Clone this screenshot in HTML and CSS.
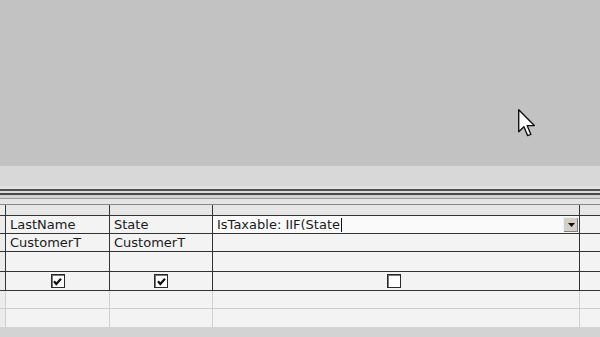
FILE: index.html
```html
<!DOCTYPE html>
<html>
<head>
<meta charset="utf-8">
<link rel="stylesheet" href="styles.css">
</head>
<body>
<div class="top">
  <svg class="cursor" width="18" height="29" viewBox="0 0 13 21" xmlns="http://www.w3.org/2000/svg">
    <path d="M0.5,0.5 L0.5,16.5 L4.3,12.8 L7,19.3 L9.3,18.4 L6.6,12 L11.8,12 Z" fill="#fff" stroke="#111" stroke-width="1" stroke-linejoin="round"/>
  </svg>
</div>
<div class="split"></div>
<div class="rules">
  <div class="ru a"></div>
  <div class="ru b"></div>
  <div class="ru c"></div>
  <div class="ru d"></div>
  <div class="ru e"></div>
  <div class="ru f"></div>
  <div class="ru g"></div>
  <div class="ru h"></div>
</div>
<div class="grid">
  <div class="row hdr">
    <div class="cell stub"></div><div class="cell c1"></div><div class="cell c2"></div><div class="cell c3"></div><div class="cell c4"></div>
  </div>
  <div class="row field">
    <div class="cell stub"></div>
    <div class="cell c1"><span class="txt">LastName</span></div>
    <div class="cell c2"><span class="txt">State</span></div>
    <div class="cell c3 combo">
      <span class="txt">IsTaxable: IIF(State</span><span class="caret"></span>
      <span class="drop"><svg width="7" height="4" viewBox="0 0 7 4"><path d="M0,0 L7,0 L3.5,4 Z" fill="#111"/></svg></span>
    </div>
    <div class="cell c4"></div>
  </div>
  <div class="row table">
    <div class="cell stub"></div>
    <div class="cell c1"><span class="txt">CustomerT</span></div>
    <div class="cell c2"><span class="txt">CustomerT</span></div>
    <div class="cell c3"></div>
    <div class="cell c4"></div>
  </div>
  <div class="row sort">
    <div class="cell stub"></div><div class="cell c1"></div><div class="cell c2"></div><div class="cell c3"></div><div class="cell c4"></div>
  </div>
  <div class="row show">
    <div class="cell stub"></div>
    <div class="cell c1 ctr"><span class="chk on"><svg width="11" height="11" viewBox="0 0 11 11"><path d="M2,5.3 L4.3,8 L9,2.8" fill="none" stroke="#111" stroke-width="2.2"/></svg></span></div>
    <div class="cell c2 ctr"><span class="chk on"><svg width="11" height="11" viewBox="0 0 11 11"><path d="M2,5.3 L4.3,8 L9,2.8" fill="none" stroke="#111" stroke-width="2.2"/></svg></span></div>
    <div class="cell c3 ctr"><span class="chk"></span></div>
    <div class="cell c4"></div>
  </div>
  <div class="row crit">
    <div class="cell stub"></div><div class="cell c1"></div><div class="cell c2"></div><div class="cell c3"></div><div class="cell c4"></div>
  </div>
  <div class="row orrow">
    <div class="cell stub"></div><div class="cell c1"></div><div class="cell c2"></div><div class="cell c3"></div><div class="cell c4"></div>
  </div>
</div>
<div class="bottom"></div>
</body>
</html>
```

FILE: styles.css
```css
html, body {
  margin: 0;
  padding: 0;
  width: 600px;
  height: 337px;
  overflow: hidden;
  background: #d3d3d3;
  font-family: "DejaVu Sans", "Liberation Sans", sans-serif;
  font-size: 13px;
  color: #1a1a1a;
}
.top {
  height: 166px;
  background: #c2c2c2;
  position: relative;
}
.cursor {
  position: absolute;
  left: 518px;
  top: 109px;
}
.split {
  height: 20px;
  background: #d8d8d8;
}
.rules { display: flex; flex-direction: column; }
.ru.a { height: 3px; background: #e2e2e2; }
.ru.b { height: 2px; background: #505050; }
.ru.c { height: 2px; background: #dadada; }
.ru.d { height: 2px; background: #474747; }
.ru.e { height: 3px; background: #d2d2d2; }
.ru.f { height: 1px; background: #9a9a9a; }
.ru.g { height: 5px; background: #e4e4e4; }
.ru.h { height: 1px; background: #8a8a8a; }

.grid { display: flex; flex-direction: column; background: #f3f3f3; }
.row {
  display: flex;
  border-bottom: 1px solid #333;
}
.cell {
  border-right: 1px solid #333;
  display: flex;
  align-items: center;
  box-sizing: content-box;
}
.stub { width: 5px; background: #ececec; }
.c1 { width: 103px; }
.c2 { width: 102px; }
.c3 { width: 366px; }
.c4 { flex: 1; border-right: none; }
.hdr { height: 10px; background: #e6e6e6; }
.field { height: 17px; }
.table { height: 17px; }
.sort { height: 19px; }
.show { height: 18px; }
.crit { height: 17px; border-bottom-color: #cdcdcd; }
.orrow { height: 18px; border-bottom: none; }
.crit .cell, .orrow .cell { border-right-color: #d0d0d0; }
.crit .c4, .orrow .c4 { border-right: none; }
.txt { padding-left: 4px; white-space: nowrap; line-height: 17px; }
.combo { background: #fafafa; position: relative; }
.caret {
  width: 1px;
  height: 14px;
  background: #111;
  margin-left: 1px;
}
.drop {
  position: absolute;
  right: 1px;
  top: 1px;
  width: 15px;
  height: 15px;
  background: #d4d0c8;
  border-top: 1px solid #f0f0f0;
  border-left: 1px solid #f0f0f0;
  box-sizing: border-box;
  box-shadow: inset -1px -1px 0 #808080;
  display: flex;
  align-items: center;
  justify-content: center;
}
.ctr { justify-content: center; }
.chk {
  width: 14px;
  height: 14px;
  box-sizing: border-box;
  border: 1px solid #2a2a2a;
  background: #fff;
  box-shadow: inset 1px 1px 0 #777;
  display: flex;
  align-items: center;
  justify-content: center;
}
.c3 .chk { margin-left: -5px; }
.bottom { height: 10px; background: #d3d3d3; }
```
